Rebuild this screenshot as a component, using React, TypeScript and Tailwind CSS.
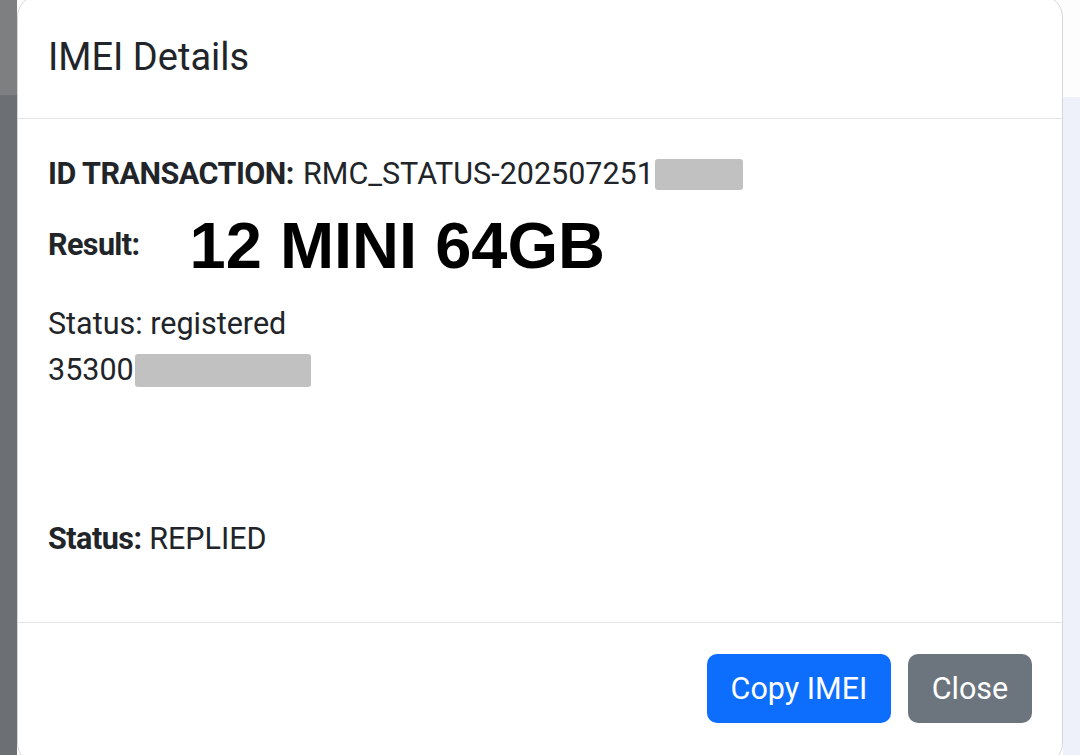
export default function App() {
  return (
    <div className="relative flex h-[755px] w-[1080px] overflow-hidden font-['Roboto',sans-serif] text-[#212529]">
      {/* backdrop, left */}
      <div className="flex w-[17px] shrink-0 flex-col">
        <div className="h-[95px] bg-[#7e7f81]" />
        <div className="flex-1 bg-[#6c6f74]" />
      </div>

      {/* modal */}
      <div className="mt-[-5px] flex h-[770px] w-[1046px] shrink-0 flex-col rounded-[22px] border border-[#d4d6da] bg-white">
        <div className="flex h-[123px] shrink-0 items-center border-b border-[#e3e5e8] pl-[30px] pt-[2px]">
          <h5 className="text-[38px] leading-[1.2] font-normal">IMEI Details</h5>
        </div>

        <div className="flex flex-col px-[30px] pt-[32px] text-[30.5px] leading-[46px]">
          <div className="flex items-center">
            <strong className="font-bold tracking-[-0.5px]">ID TRANSACTION:</strong>
            <span className="ml-[9px]">RMC_STATUS-202507251</span>
            <span className="ml-px inline-block h-[31px] w-[88px] rounded-[3px] bg-[#c1c1c1]" />
          </div>

          <div className="mt-[9px] flex h-[78px] items-center">
            <strong className="font-bold tracking-[-0.6px]">Result:</strong>
            <span className="ml-[50px] font-['Liberation_Sans',Arial,sans-serif] text-[65px] leading-none font-bold text-black">
              12 MINI 64GB
            </span>
          </div>

          <div className="mt-[17px]">Status: registered</div>
          <div className="flex items-center">
            <span>35300</span>
            <span className="ml-px inline-block h-[33px] w-[176px] rounded-[3px] bg-[#c1c1c1]" />
          </div>

          <div className="mt-[123px]">
            <strong className="font-bold tracking-[-0.5px]">Status:</strong> REPLIED
          </div>
        </div>

        <div className="mt-auto flex h-[142px] shrink-0 items-start justify-end gap-[17px] border-t border-[#e3e5e8] pr-[30px] pt-[31px]">
          <button className="flex h-[69px] w-[184px] items-center justify-center rounded-[10px] bg-[#0d6efd] text-[30.5px] text-white">
            Copy IMEI
          </button>
          <button className="flex h-[69px] w-[124px] items-center justify-center rounded-[10px] bg-[#6c757d] text-[30.5px] text-white">
            Close
          </button>
        </div>
      </div>

      {/* backdrop, right */}
      <div className="flex flex-1 flex-col">
        <div className="h-[97px] bg-[#fdfdfd]" />
        <div className="flex-1 bg-[#eef1fa]" />
      </div>
    </div>
  );
}
